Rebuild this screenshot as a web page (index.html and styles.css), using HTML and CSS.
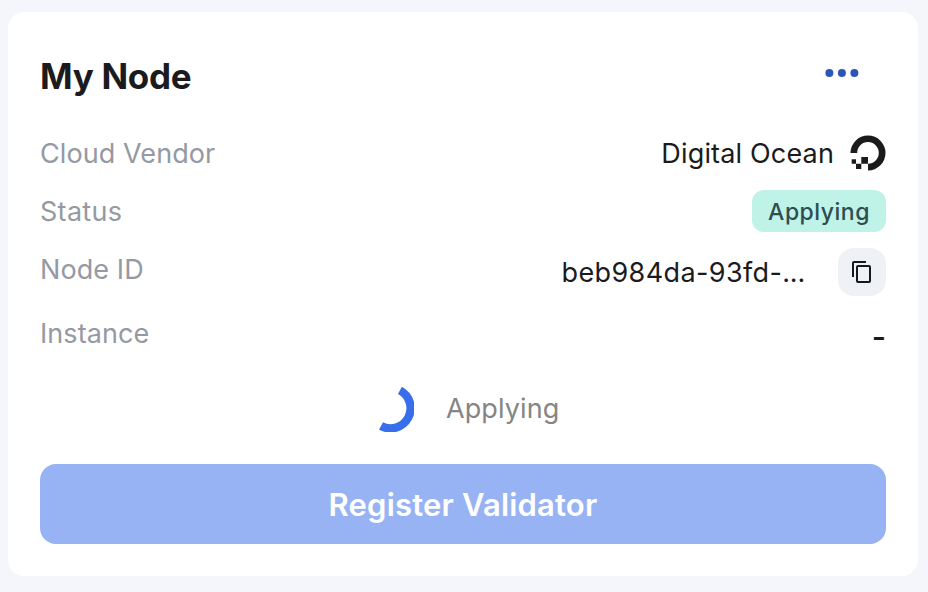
FILE: index.html
```html
<!DOCTYPE html>
<html lang="en">
<head>
<meta charset="utf-8">
<title>My Node</title>
<link rel="stylesheet" href="styles.css">
</head>
<body>
<main class="card">
  <header class="header">
    <h1 class="title">My Node</h1>
    <button class="more" aria-label="More"><svg viewBox="0 0 34 8" aria-hidden="true"><circle cx="4.400" cy="4" r="4"/><circle cx="16.900" cy="4" r="4"/><circle cx="29.400" cy="4" r="4"/></svg></button>
  </header>
  <dl class="rows">
    <div class="row vendor">
      <dt>Cloud Vendor</dt>
      <dd><span class="vendor-name">Digital Ocean</span>
        <svg class="logo" viewBox="0 0 36 36" aria-hidden="true"><path d="M18 35.500v-6.800A10.800 10.800 0 1 0 7.200 18H.5A17.500 17.500 0 1 1 18 35.500zM11.300 22H18v6.700h-6.700zM6 28.700h5.300V34H6zM1.700 24.300H6v4.400H1.700z" fill="#1b1b1d"/></svg>
      </dd>
    </div>
    <div class="row status">
      <dt>Status</dt>
      <dd><span class="badge">Applying</span></dd>
    </div>
    <div class="row node">
      <dt>Node ID</dt>
      <dd><span class="node-id">beb984da-93fd-<span class="ellipsis">...</span></span>
        <button class="copy" aria-label="Copy"><svg viewBox="0 0 24 24" aria-hidden="true"><path d="M3 17V3Q3 2 4 2H16" fill="none" stroke="#18181b" stroke-width="2"/><rect x="7" y="6" width="13" height="16" rx="1" fill="none" stroke="#18181b" stroke-width="2"/></svg></button>
      </dd>
    </div>
    <div class="row instance">
      <dt>Instance</dt>
      <dd><span class="dash">-</span></dd>
    </div>
  </dl>
  <div class="progress">
    <svg class="spinner" viewBox="0 0 48 48" aria-hidden="true"><path d="M33.900 6.400A20 20 0 0 1 15 42" fill="none" stroke="#396eea" stroke-width="8.400"/></svg>
    <span class="progress-text">Applying</span>
  </div>
  <button class="register">Register Validator</button>
</main>
</body>
</html>
```

FILE: styles.css
```css
* { box-sizing: border-box; }
body { margin: 0; padding: 12px 10px 16px 8px; height: 592px; background: #f5f6fb; font-family: Inter, sans-serif; color: #1b1b1d; }
button { border: 0; padding: 0; font: inherit; }
.card { height: 564px; padding: 32px; border-radius: 16px; background: #fff; }
.header { display: flex; justify-content: space-between; height: 81px; }
.title { margin: 0; padding-top: 10px; font-size: 35px; line-height: 44px; font-weight: 700; letter-spacing: -0.3px; }
.more { width: 34px; height: 8px; margin: 25px 27px 0 0; background: none; }
.more svg { display: block; width: 34px; height: 8px; fill: #2c55b8; }
.rows { margin: 0; }
.row { display: flex; justify-content: space-between; height: 58px; font-size: 27px; line-height: 34px; }
.row dt { padding-top: 12px; color: #9499a3; letter-spacing: 0.08px; }
.status dt { letter-spacing: 0.3px; }
.row dd { display: flex; margin: 0; }
.vendor-name { padding-top: 12px; letter-spacing: 0.16px; }
.logo { width: 36px; height: 36px; margin: 10px 0 0 16px; }
.badge { width: 134px; height: 42px; margin-top: 7px; border-radius: 12px; background: #bff3e8; color: #2d4d50; font-size: 23px; line-height: 44px; font-weight: 500; letter-spacing: 0.5px; text-align: center; }
.node { height: 64px; }
.node-id { padding-top: 15px; letter-spacing: 0.38px; }
.ellipsis { letter-spacing: -0.2px; }
.copy { display: grid; place-items: center; width: 48px; height: 48px; margin: 7px 0 0 33px; border-radius: 16px; background: #eef1f6; }
.copy svg { width: 24px; height: 24px; }
.dash { padding-top: 15px; font-size: 31px; font-weight: 500; }
.progress { display: flex; align-items: center; height: 48px; margin-top: 21px; padding-left: 326px; gap: 32px; color: #858585; font-size: 27px; letter-spacing: 0.1px; }
.spinner { width: 48px; height: 48px; }
.progress-text { padding-top: 1px; }
.register { display: block; width: 846px; height: 80px; margin-top: 32px; border-radius: 16px; background: #98b3f3; color: #fff; font-size: 31px; font-weight: 600; letter-spacing: 0.18px; }
```
